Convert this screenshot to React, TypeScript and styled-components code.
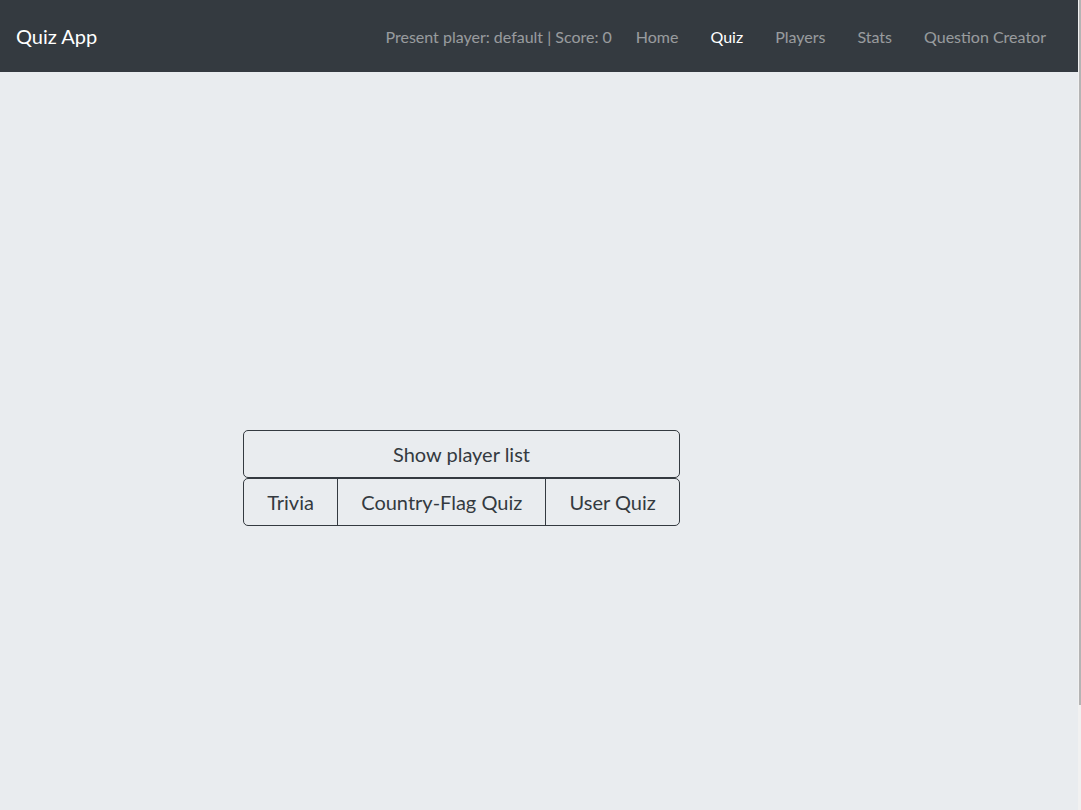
import React from "react";
import styled, { createGlobalStyle } from "styled-components";

const GlobalStyle = createGlobalStyle`
  html, body {
    margin: 0;
    padding: 0;
    height: 100%;
    overflow: hidden;
  }
  body {
    font-family: "Lato", "Noto Sans", sans-serif;
    background: #e9ecef;
  }
  #root {
    height: 100%;
  }
`;

const Shell = styled.div`
  display: flex;
  height: 810px;
`;

const Page = styled.div`
  flex: 1;
  display: flex;
  flex-direction: column;
  min-width: 0;
`;

const ScrollRail = styled.div`
  width: 3px;
  background: #f1f1f1;
  display: flex;
  justify-content: flex-end;
`;

const ScrollThumb = styled.div`
  width: 2px;
  height: 705px;
  background: #b4b4b4;
`;

const Navbar = styled.nav`
  height: 72px;
  padding: 0 16px;
  background: #343a40;
  display: flex;
  align-items: center;
  justify-content: space-between;
`;

const Brand = styled.span`
  color: #fff;
  font-size: 20px;
`;

const NavList = styled.div`
  display: flex;
  align-items: center;
`;

const PlayerInfo = styled.span`
  color: rgba(255, 255, 255, 0.5);
  font-size: 16px;
  padding: 8px 8px 8px 0;
`;

const NavLink = styled.a<{ $active?: boolean }>`
  color: ${(p) => (p.$active ? "#fff" : "rgba(255, 255, 255, 0.5)")};
  font-size: 16px;
  padding: 8px 16px;
  text-decoration: none;
  cursor: pointer;
  &:last-child {
    padding-right: 16px;
  }
`;

const Main = styled.main`
  flex: 1;
  background: #e9ecef;
  border-radius: 4px 4px 0 0;
  padding: 358px 0 0 243px;
`;

const ButtonStack = styled.div`
  width: 437px;
  display: flex;
  flex-direction: column;
`;

const OutlineButton = styled.button`
  font-family: inherit;
  font-size: 20px;
  color: #343a40;
  background: transparent;
  border: 1px solid #343a40;
  border-radius: 5px;
  height: 48px;
  padding: 0 16px;
  cursor: pointer;
`;

const ButtonGroup = styled.div`
  display: flex;
  width: 100%;

  & > ${OutlineButton} {
    flex: 1 1 auto;
    border-radius: 0;
  }
  & > ${OutlineButton}:not(:first-child) {
    margin-left: -1px;
  }
  & > ${OutlineButton}:first-child {
    border-radius: 5px 0 0 5px;
  }
  & > ${OutlineButton}:last-child {
    border-radius: 0 5px 5px 0;
  }
`;

const links = ["Home", "Quiz", "Players", "Stats", "Question Creator"];

const App: React.FC = () => {
  return (
    <>
      <GlobalStyle />
      <Shell>
        <Page>
          <Navbar>
            <Brand>Quiz App</Brand>
            <NavList>
              <PlayerInfo>Present player: default | Score: 0</PlayerInfo>
              {links.map((l) => (
                <NavLink key={l} $active={l === "Quiz"}>
                  {l}
                </NavLink>
              ))}
            </NavList>
          </Navbar>
          <Main>
            <ButtonStack>
              <OutlineButton>Show player list</OutlineButton>
              <ButtonGroup>
                <OutlineButton>Trivia</OutlineButton>
                <OutlineButton>Country-Flag Quiz</OutlineButton>
                <OutlineButton>User Quiz</OutlineButton>
              </ButtonGroup>
            </ButtonStack>
          </Main>
        </Page>
        <ScrollRail>
          <ScrollThumb />
        </ScrollRail>
      </Shell>
    </>
  );
};

export default App;
